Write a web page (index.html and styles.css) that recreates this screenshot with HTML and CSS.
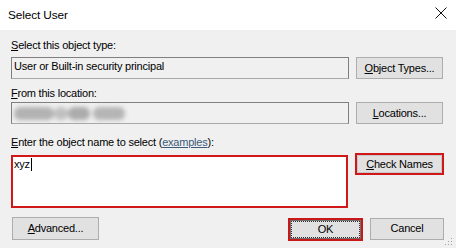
FILE: index.html
```html
<!DOCTYPE html>
<html>
<head>
<meta charset="utf-8">
<link rel="stylesheet" href="styles.css">
</head>
<body>
<div class="dialog">
  <div class="titlebar">
    <span class="title">Select User</span>
    <span class="close">
      <svg width="12" height="12" viewBox="0 0 12 12"><path d="M0.5 0.5 L11.5 11.5 M11.5 0.5 L0.5 11.5" stroke="#111" stroke-width="1" fill="none"/></svg>
    </span>
  </div>
  <div class="content">
    <div class="label l1"><u>S</u>elect this object type:</div>
    <div class="row r1">
      <div class="field">User or Built-in security principal</div>
      <div class="btn wide"><u>O</u>bject Types...</div>
    </div>
    <div class="label l2"><u>F</u>rom this location:</div>
    <div class="row r2">
      <div class="field"><span class="redact"><span class="blob b1"></span><span class="blob b2"></span><span class="blob b3"></span><span class="blob b4"></span></span></div>
      <div class="btn wide"><u>L</u>ocations...</div>
    </div>
    <div class="label l3"><u>E</u>nter the object name to select (<span class="link">examples</span>):</div>
    <div class="row r3">
      <div class="names">xyz<span class="caret"></span></div>
      <div class="btn check"><u>C</u>heck Names</div>
    </div>
    <div class="bottom">
      <div class="btn adv"><u>A</u>dvanced...</div>
      <div class="spacer"></div>
      <div class="btn ok"><span class="focus">OK</span></div>
      <div class="btn cancel">Cancel</div>
    </div>
  </div>
  <svg class="grip" width="8" height="8" viewBox="0 0 8 8">
    <rect x="6" y="0" width="1" height="1" fill="#a0a0a0"/>
    <rect x="3" y="3" width="1" height="1" fill="#a0a0a0"/>
    <rect x="6" y="3" width="1" height="1" fill="#a0a0a0"/>
    <rect x="0" y="6" width="1" height="1" fill="#a0a0a0"/>
    <rect x="3" y="6" width="1" height="1" fill="#a0a0a0"/>
    <rect x="6" y="6" width="1" height="1" fill="#a0a0a0"/>
  </svg>
</div>
</body>
</html>
```
FILE: styles.css
```css
* { box-sizing: border-box; }
html, body { margin: 0; padding: 0; }
body {
  width: 456px;
  height: 248px;
  overflow: hidden;
  font-family: "Liberation Sans", Arial, sans-serif;
  font-size: 11px;
  color: #000;
  background: #f0f0f0;
}
.dialog {
  position: relative;
  width: 456px;
  height: 248px;
  background: #f0f0f0;
}
.titlebar {
  height: 30px;
  background: #fff;
  display: flex;
  align-items: center;
  justify-content: space-between;
  padding: 0 9px 0 8px;
}
.title {
  font-size: 11.8px;
  letter-spacing: -0.1px;
  margin-top: -1px;
}
.close {
  display: flex;
  width: 12px;
  height: 12px;
  margin-top: -4px;
}
.content {
  padding: 9px 12px 0 11px;
  letter-spacing: -0.22px;
}
.label {
  line-height: 13px;
  height: 13px;
  white-space: nowrap;
}
.l1 { margin-bottom: 5px; }
.l2 { margin-top: 8px; margin-bottom: 2px; }
.l3 { margin-top: 12px; margin-bottom: 4px; }
.link { color: #3c5a78; text-decoration: underline; }
.row {
  display: grid;
  grid-template-columns: 338px 89px;
  column-gap: 6px;
  align-items: start;
}
.field {
  height: 22px;
  border: 1px solid #7f7f7f;
  border-bottom-color: #a8a8a8;
  background: #f0f0f0;
  line-height: 16px;
  padding: 0 2px 4px 2px;
  white-space: nowrap;
  overflow: hidden;
}
.redact {
  display: flex;
  align-items: center;
  height: 20px;
  filter: blur(2.2px);
}
.blob {
  display: block;
  height: 13px;
  background: #b2b2b2;
  border-radius: 6px;
}
.b1 { width: 40px; }
.b2 { width: 14px; background: #c0c0c0; }
.b3 { width: 22px; background: #acacac; }
.b4 { width: 32px; margin-left: 3px; background: #b5b5b5; }
.btn {
  height: 22px;
  background: #e1e1e1;
  border: 1px solid #adadad;
  display: flex;
  align-items: center;
  justify-content: center;
  white-space: nowrap;
  line-height: 13px;
}
.btn.wide { width: 87px; margin-left: 1px; }
.names {
  margin-top: 2px;
  height: 53px;
  width: 337px;
  border: 2px solid #d01818;
  background: #fff;
  padding: 1px 0 0 1px;
  line-height: 13px;
  display: flex;
  align-items: flex-start;
}
.caret {
  display: inline-block;
  width: 1px;
  height: 13px;
  background: #000;
  margin-left: 1px;
}
.btn.check {
  width: 89px;
  border: 2px solid #d01818;
  background: #e1e1e1;
  box-shadow: inset 0 0 0 1px #c8c8c8;
}
.bottom {
  display: flex;
  align-items: center;
  margin-top: 8px;
  height: 24px;
}
.btn.adv { width: 87px; height: 23px; margin-left: 1px; }
.spacer { flex: 1; }
.btn.ok {
  width: 75px;
  height: 23px;
  border: 2px solid #c81818;
  box-shadow: inset 0 0 0 1px #707070;
  margin-top: 2px;
}
.focus {
  display: flex;
  align-items: center;
  justify-content: center;
  width: 67px;
  height: 15px;
  outline: 1px dotted #333;
}
.btn.cancel {
  width: 74px;
  height: 22px;
  margin-left: 7px;
  margin-top: 1px;
}
.grip {
  position: absolute;
  right: 3px;
  bottom: 2px;
}
```
